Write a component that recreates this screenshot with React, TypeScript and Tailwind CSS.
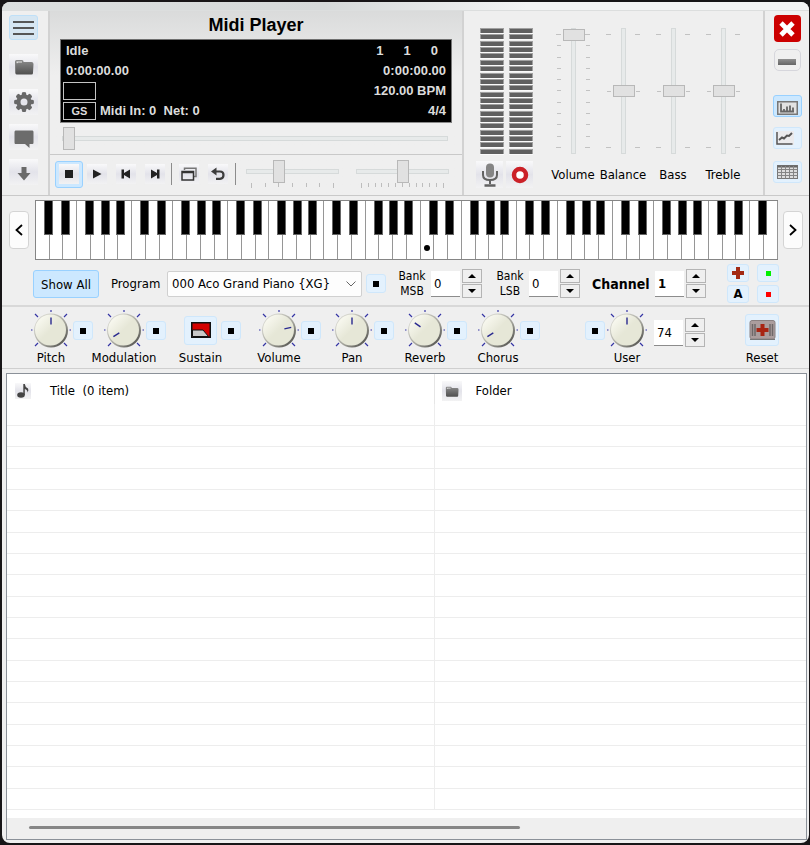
import type { ReactNode } from "react";

const LABEL = "text-[13px] leading-4 whitespace-nowrap";
const SOFT = "flex items-center justify-center bg-linear-to-b from-[#f9f9fa] via-[#e3e3ea] to-[#f2f2f3]";
const BLUE = "flex items-center justify-center rounded-[3px] border border-[#cfe7fb] bg-[#e3f1fd]";
const BLUE_ON = "flex items-center justify-center rounded-[3px] border border-[#99d1ff] bg-[#cce8ff]";

function IconButton({ label, className, children }: { label: string; className: string; children: ReactNode }) {
  return (
    <button type="button" aria-label={label} className={`shrink-0 ${className}`}>
      {children}
    </button>
  );
}

function FolderIcon({ className }: { className: string }) {
  return (
    <svg viewBox="0 0 20 16" className={className}>
      <defs>
        <linearGradient id="folder" x1="0" y1="0" x2="0" y2="1">
          <stop offset="0" stopColor="#8c8c8c" />
          <stop offset="1" stopColor="#505050" />
        </linearGradient>
      </defs>
      <path d="M1 2.5Q1 1 2.500 1H8Q9.500 1 9.500 2.500V3H17.500Q19.500 3 19.500 5L19 14Q19 15.500 17.500 15.500H3Q1.500 15.500 1.300 14Z" fill="url(#folder)" />
      <path d="M2.500 3.500V2.500H8V3.500H4L3 4.500Z" fill="#e8e8e8" />
    </svg>
  );
}

function GearIcon() {
  return (
    <svg viewBox="0 0 22 22" className="size-[22px]" fill="#686868">
      {[0, 45, 90, 135, 180, 225, 270, 315].map((a) => (
        <path key={a} d="M9 1.500Q11 .5 13 1.500L13.500 5H8.500Z" transform={`rotate(${a} 11 11)`} />
      ))}
      <circle cx="11" cy="11" r="5.500" fill="none" stroke="#686868" strokeWidth="4" />
    </svg>
  );
}

function SideBar() {
  return (
    <nav className="flex w-[46px] shrink-0 flex-col pt-1 pl-[7px]">
      <IconButton label="Menu" className="flex h-[25px] w-[29px] items-center justify-center rounded-[3px] border border-[#bfe0f8] bg-[#d6e6f2]">
        <svg viewBox="0 0 21 16" className="h-4 w-[21px]" stroke="#565656" strokeWidth="2.200">
          <path d="M0 2H21M0 8H21M0 14H21" />
        </svg>
      </IconButton>
      <IconButton label="Open folder" className={`${SOFT} mt-[14px] h-[26px] w-[29px]`}>
        <FolderIcon className="h-4 w-5" />
      </IconButton>
      <IconButton label="Settings" className={`${SOFT} mt-[9px] h-[26px] w-[29px]`}>
        <GearIcon />
      </IconButton>
      <IconButton label="Lyrics" className={`${SOFT} mt-[9px] h-[26px] w-[29px]`}>
        <svg viewBox="0 0 20 18" className="mt-1 h-[18px] w-5">
          <path d="M1.500 .5H18.500Q19.500 .5 19.500 2V12.500Q19.500 14 18.500 14H15.500L15.500 18L11 14H1.500Q.5 14 .5 12.500V2Q.5 .5 1.500 .5Z" fill="#6c6c6c" />
        </svg>
      </IconButton>
      <IconButton label="Expand" className={`${SOFT} mt-[9px] h-[26px] w-[29px]`}>
        <svg viewBox="0 0 14 14" className="mt-1 size-[14px]" fill="#6a6a6a">
          <path d="M4.500 0H9.500V6H13.500L7 13.500L.5 6H4.500Z" />
        </svg>
      </IconButton>
    </nav>
  );
}

function Display() {
  return (
    <div className="mx-[10px] border border-t-[#707070] border-r-[#777] border-b-[#8a8a8a] border-l-[#777] bg-black px-[5px] pt-px pb-px font-['Liberation_Sans',Arial,sans-serif] text-[13px] leading-5 font-bold text-[#dcdcdc]">
      <div className="flex justify-between">
        <span>Idle</span>
        <span className="flex gap-5 pr-2">
          <span>1</span>
          <span>1</span>
          <span>0</span>
        </span>
      </div>
      <div className="flex justify-between">
        <span>0:00:00.00</span>
        <span>0:00:00.00</span>
      </div>
      <div className="flex items-center justify-between">
        <span className="-ml-[3px] h-[18px] w-[33px] border border-[#c4c4c4]" />
        <span>120.00 BPM</span>
      </div>
      <div className="flex items-center justify-between">
        <span className="flex items-center gap-1 whitespace-pre">
          <span className="-ml-[3px] flex h-[18px] w-[33px] items-center justify-center border border-[#c4c4c4] text-[11px]">GS</span>
          Midi In: 0{"  "}Net: 0
        </span>
        <span>4/4</span>
      </div>
    </div>
  );
}

const H_RANGE =
  "block w-full appearance-none bg-transparent [&::-webkit-slider-runnable-track]:h-[5px] [&::-webkit-slider-runnable-track]:border [&::-webkit-slider-runnable-track]:border-[#d6dada] [&::-webkit-slider-runnable-track]:bg-[#e7eaea] [&::-webkit-slider-thumb]:-mt-[10px] [&::-webkit-slider-thumb]:h-[23px] [&::-webkit-slider-thumb]:w-3 [&::-webkit-slider-thumb]:appearance-none [&::-webkit-slider-thumb]:border [&::-webkit-slider-thumb]:border-[#b8b8b8] [&::-webkit-slider-thumb]:bg-[#e1e1e1]";

function SmallSlider({ label, value, ticks }: { label: string; value: number; ticks: number }) {
  return (
    <div className="min-w-0 flex-1">
      <input type="range" aria-label={label} min={0} max={12} defaultValue={value} className={`h-[23px] ${H_RANGE}`} />
      <div className="flex h-[5px] justify-between px-[5px]">
        {Array.from({ length: ticks }, (_, i) => (
          <span key={i} className={`w-px bg-[#bdbdbd] ${i === 0 || i === ticks - 1 ? "h-[5px]" : "h-1"}`} />
        ))}
      </div>
    </div>
  );
}

function Transport() {
  const pad = `${SOFT} size-5`;
  return (
    <div className="flex items-center border-t border-[#c9c9c9] pt-[5px] pb-[7px] pl-[5px]">
      <IconButton label="Stop" className={`${BLUE_ON} h-[27px] w-7`}>
        <span className={`${SOFT} size-5`}>
          <span className="size-2 bg-[#202020]" />
        </span>
      </IconButton>
      <div className="ml-1 flex gap-[9px]">
        <IconButton label="Play" className={pad}>
          <svg viewBox="0 0 10 10" className="size-[10px]" fill="#222"><path d="M1 .5L9.500 5L1 9.500Z" /></svg>
        </IconButton>
        <IconButton label="Previous" className={pad}>
          <svg viewBox="0 0 10 10" className="size-[10px]" fill="#222"><path d="M.5 .5H3V4L9 .5V9.500L3 6V9.500H.5Z" /></svg>
        </IconButton>
        <IconButton label="Next" className={pad}>
          <svg viewBox="0 0 10 10" className="size-[10px]" fill="#222"><path d="M9.500 .5H7V4L1 .5V9.500L7 6V9.500H9.500Z" /></svg>
        </IconButton>
      </div>
      <span className="ml-[6px] h-[22px] w-px bg-[#8c8c8c]" />
      <div className="ml-[7px] flex gap-[9px]">
        <IconButton label="Playlist window" className={pad}>
          <svg viewBox="0 0 16 14" className="h-[14px] w-4" fill="none" stroke="#333" strokeWidth="1.500">
            <path d="M3.500 3V1.200H15V9.500H13" stroke="#777" />
            <rect x="1" y="4.500" width="11.500" height="8.500" />
            <path d="M1 5.500H12.500" />
          </svg>
        </IconButton>
        <IconButton label="Repeat" className={pad}>
          <svg viewBox="0 0 14 14" className="size-[14px]">
            <path d="M3.500 4.500H9Q12.500 4.500 12.500 8T9 11.800H5" fill="none" stroke="#3c3c3c" strokeWidth="2.200" />
            <path d="M0 4.500L5.500 .5V8.500Z" fill="#3c3c3c" />
          </svg>
        </IconButton>
      </div>
      <span className="ml-[7px] h-[22px] w-px bg-[#8c8c8c]" />
      <div className="mr-[13px] ml-[10px] flex min-w-0 flex-1 gap-[17px]">
        <SmallSlider label="Tempo" value={4} ticks={7} />
        <SmallSlider label="Transpose" value={6} ticks={13} />
      </div>
    </div>
  );
}

function Player() {
  return (
    <section className="flex min-w-0 flex-1 flex-col border-l-2 border-[#d2d2d2] bg-linear-to-b from-[#dadbdb] via-[#efefef] via-35% to-[#efefef]">
      <h1 className="py-0.5 text-center font-['Liberation_Sans',Arial,sans-serif] text-lg leading-6 font-bold">Midi Player</h1>
      <Display />
      <div className="pt-1 pr-[14px] pb-1 pl-3">
        <input type="range" aria-label="Position" min={0} max={100} defaultValue={0} className={`h-[23px] ${H_RANGE}`} />
      </div>
      <Transport />
    </section>
  );
}

function Meter() {
  return (
    <div className="flex h-[126px] w-6 flex-col justify-between">
      {Array.from({ length: 20 }, (_, i) => (
        <span key={i} className="h-[5px] border-x border-t border-[#a0a0a0] bg-[#606060] shadow-[0_1px_0_#fafafa]" />
      ))}
    </div>
  );
}

function TickColumn({ full }: { full: boolean }) {
  return (
    <div className="flex h-[114px] flex-col items-center justify-between">
      {Array.from({ length: full ? 11 : 3 }, (_, i) => (
        <span key={i} className={`h-px bg-[#c2c2c2] ${i === 0 || i === (full ? 10 : 2) ? "w-[5px]" : "w-1"}`} />
      ))}
    </div>
  );
}

const V_RANGE =
  "h-[126px] w-[22px] [writing-mode:vertical-lr] [direction:rtl] appearance-none bg-transparent [&::-webkit-slider-runnable-track]:w-[5px] [&::-webkit-slider-runnable-track]:border [&::-webkit-slider-runnable-track]:border-[#d6dada] [&::-webkit-slider-runnable-track]:bg-[#e7eaea] [&::-webkit-slider-thumb]:-ml-[9px] [&::-webkit-slider-thumb]:h-3 [&::-webkit-slider-thumb]:w-[22px] [&::-webkit-slider-thumb]:appearance-none [&::-webkit-slider-thumb]:border [&::-webkit-slider-thumb]:border-[#b8b8b8] [&::-webkit-slider-thumb]:bg-[#e1e1e1]";

function Fader({ id, label, value, full = false }: { id: string; label: string; value: number; full?: boolean }) {
  return (
    <div className="flex w-[50px] flex-col items-center">
      <div className="flex items-center gap-px">
        <TickColumn full={full} />
        <input id={id} type="range" min={0} max={100} defaultValue={value} className={V_RANGE} />
        <TickColumn full={full} />
      </div>
      <label htmlFor={id} className={`mt-[13px] ${LABEL}`}>{label}</label>
    </div>
  );
}

function Mixer() {
  return (
    <section className="flex w-[301px] shrink-0 border-l-2 border-[#d2d2d2] pt-[17px] pl-[12px]">
      <div>
        <div className="flex gap-[5px] pl-1">
          <Meter />
          <Meter />
        </div>
        <div className="mt-[7px] flex gap-[3px]">
          <IconButton label="Microphone" className={`${SOFT} size-[27px]`}>
            <svg viewBox="0 0 18 24" className="h-6 w-[18px]" fill="none" stroke="#626262" strokeWidth="2">
              <rect x="5" y=".5" width="8" height="14" rx="4" fill="#858585" stroke="none" />
              <path d="M2 8V12Q2 17 9 17T16 12V8M9 17V21" />
              <path d="M3.500 22.500H14.500" strokeWidth="2.500" />
            </svg>
          </IconButton>
          <IconButton label="Record" className={`${SOFT} size-[27px]`}>
            <svg viewBox="0 0 18 18" className="size-[18px]">
              <circle cx="9" cy="9" r="6" fill="#fff" stroke="#cb2128" strokeWidth="4.500" />
            </svg>
          </IconButton>
        </div>
      </div>
      <div className="ml-[15px] flex">
        <Fader id="main-volume" label="Volume" value={100} full />
        <Fader id="balance" label="Balance" value={50} />
        <Fader id="bass" label="Bass" value={50} />
        <Fader id="treble" label="Treble" value={50} />
      </div>
    </section>
  );
}

function WindowTools() {
  return (
    <section className="flex w-[46px] shrink-0 flex-col items-center border-l-2 border-[#d2d2d2] pt-1">
      <IconButton label="Close" className="flex size-[27px] items-center justify-center rounded-[4px] bg-[#cc0000]">
        <svg viewBox="0 0 16 16" className="size-4" stroke="#fff" strokeWidth="4.800">
          <path d="M2 2L14 14M14 2L2 14" />
        </svg>
      </IconButton>
      <IconButton label="Minimize" className="mt-[7px] flex h-[22px] w-[27px] items-center justify-center rounded-[5px] border border-[#d6d6dc] bg-[#efefef]">
        <span className="mt-1 h-[6px] w-[18px] bg-linear-to-b from-[#909090] to-[#666]" />
      </IconButton>
      <IconButton label="Spectrum" className={`${BLUE_ON} mt-6 h-[22px] w-[29px]`}>
        <svg viewBox="0 0 21 14" className="mt-1 h-[14px] w-[21px]">
          <rect x=".75" y=".75" width="19.500" height="12.500" fill="#e2e2e2" stroke="#777" strokeWidth="1.500" />
          <path d="M4 2.500V10.500H17M7 10V8M10 10V5.500M13 10V4.500M16 10V6.500" fill="none" stroke="#666" strokeWidth="1.800" />
        </svg>
      </IconButton>
      <IconButton label="Graph" className={`${BLUE} mt-[10px] h-[22px] w-[29px]`}>
        <svg viewBox="0 0 18 14" className="mr-1 h-[14px] w-[18px]" fill="none" stroke="#555">
          <rect width="18" height="14" fill="#ebebed" stroke="none" />
          <path d="M1 1V13H16.500" strokeWidth="1.500" />
          <path d="M3 9L6 6.500L8 7.500L11 4.500L13 5L16 2" strokeWidth="2" />
        </svg>
      </IconButton>
      <IconButton label="Grid" className={`${BLUE} mt-[12px] h-[22px] w-[29px]`}>
        <svg viewBox="0 0 21 14" className="h-[14px] w-[21px]">
          <rect x=".5" y=".5" width="20" height="13" fill="#ddd" stroke="#777" />
          <path d="M.5 1.500H20.500" stroke="#666" strokeWidth="2" />
          <path d="M.5 4.500H20.500M.5 7.500H20.500M.5 10.500H20.500M4.500 1V13.500M8.500 1V13.500M12.500 1V13.500M16.500 1V13.500" stroke="#858585" />
        </svg>
      </IconButton>
    </section>
  );
}

const SHARPS: Record<number, string> = { 0: "left-[8px]", 1: "left-[11px]", 3: "left-[8px]", 4: "left-[10px]", 5: "left-[11px]" };

function Keyboard() {
  return (
    <div className="flex h-[60px] min-w-0 flex-1 border-t border-b border-l border-[#858585] bg-white">
      {Array.from({ length: 54 }, (_, i) => {
        const sharp = i < 53 ? SHARPS[i % 7] : undefined;
        return (
          <div key={i} className="relative flex-1">
            <button type="button" aria-label={`White key ${i + 1}`} className="flex h-full w-full items-end justify-center border-r border-[#969696] pb-[8px]">
              {i === 28 && <span className="size-[6px] rounded-full bg-black" />}
            </button>
            {sharp && (
              <button type="button" aria-label={`Black key ${i + 1}`} className={`absolute top-0 z-10 h-[34px] w-[9px] border border-t-0 border-[#666] bg-black ${sharp}`} />
            )}
          </div>
        );
      })}
    </div>
  );
}

function PageButton({ label, path }: { label: string; path: string }) {
  return (
    <IconButton label={label} className="flex h-[38px] w-5 items-center justify-center rounded-[4px] border border-[#d4d4d4] bg-[#fcfcfc]">
      <svg viewBox="0 0 8 12" className="h-3 w-2" fill="none" stroke="#000" strokeWidth="1.800">
        <path d={path} />
      </svg>
    </IconButton>
  );
}

function DotButton({ label }: { label: string }) {
  return (
    <IconButton label={label} className={`${BLUE} h-[19px] w-5`}>
      <span className="size-[6px] bg-black" />
    </IconButton>
  );
}

function Spinner({ id, value, bold = false }: { id: string; value: string; bold?: boolean }) {
  const step = "flex h-[14px] w-5 items-center justify-center border border-[#b4b4b4] bg-[#efefef]";
  return (
    <div className="flex items-center gap-[2px]">
      <input id={id} type="text" aria-label={id} defaultValue={value} className={`h-[26px] w-[29px] border-b border-[#8c8c8c] bg-white px-[3px] text-[13px] ${bold ? "font-bold" : ""}`} />
      <div className="flex flex-col gap-px">
        <IconButton label="Increase" className={step}>
          <svg viewBox="0 0 8 4" className="h-1 w-2"><path d="M4 0L8 4H0Z" /></svg>
        </IconButton>
        <IconButton label="Decrease" className={step}>
          <svg viewBox="0 0 8 4" className="h-1 w-2"><path d="M4 4L8 0H0Z" /></svg>
        </IconButton>
      </div>
    </div>
  );
}

function ProgramRow() {
  const mini = `${BLUE} h-[18px] w-[22px]`;
  return (
    <section className="flex h-[43px] items-center border-b-2 border-[#d8d8d8] pb-0.5 pl-[31px]">
      <button type="button" className={`${BLUE_ON} h-7 w-[66px] shrink-0 pt-0.5 ${LABEL}`}>Show All</button>
      <label htmlFor="program" className={`ml-3 w-[51px] ${LABEL}`}>Program</label>
      <div className="relative ml-[5px] w-[195px]">
        <select id="program" className="block h-[26px] w-full appearance-none rounded-[2px] border border-[#d0d0d0] bg-[#fdfdfd] pl-1 text-[13px]">
          <option>{"000 Aco Grand Piano {XG}"}</option>
        </select>
        <svg viewBox="0 0 10 6" className="pointer-events-none absolute top-[10px] right-[6px] h-[6px] w-[10px]" fill="none" stroke="#666">
          <path d="M.5 .5L5 5L9.500 .5" />
        </svg>
      </div>
      <div className="mr-[10px] ml-1 flex">
        <DotButton label="Lock program" />
      </div>
      <div className="flex items-center">
        <label htmlFor="msb" className="w-8 text-center text-[12px] leading-[15px]">Bank MSB</label>
        <div className="ml-[3px]"><Spinner id="msb" value="0" /></div>
      </div>
      <div className="ml-3 flex items-center">
        <label htmlFor="lsb" className="w-8 text-center text-[12px] leading-[15px]">Bank LSB</label>
        <div className="ml-[3px]"><Spinner id="lsb" value="0" /></div>
      </div>
      <div className="ml-3 flex items-center">
        <label htmlFor="channel" className="w-[63px] text-sm font-bold">Channel</label>
        <Spinner id="channel" value="1" bold />
      </div>
      <div className="ml-[21px] grid grid-cols-2 gap-x-2 gap-y-[3px]">
        <IconButton label="Add channel" className={mini}>
          <svg viewBox="0 0 12 12" className="size-3" fill="#a32a14"><path d="M4 0H8V4H12V8H8V12H4V8H0V4H4Z" /></svg>
        </IconButton>
        <IconButton label="Enable" className={mini}><span className="size-[5px] bg-[#00f000]" /></IconButton>
        <button type="button" className={`${mini} text-[13px] font-bold`}>A</button>
        <IconButton label="Disable" className={mini}><span className="size-[5px] bg-[#f00]" /></IconButton>
      </div>
    </section>
  );
}

function Knob({ id, label, angle }: { id: string; label: string; angle: number }) {
  return (
    <div className="flex w-10 flex-col items-center">
      <div className="relative size-10">
        <svg viewBox="0 0 40 40" className="size-10">
          <defs>
            <linearGradient id="knob-rim" x1="0" y1="0" x2="1" y2="1">
              <stop offset=".2" stopColor="#d2d2ca" />
              <stop offset=".6" stopColor="#a0a098" />
              <stop offset=".9" stopColor="#50504c" />
            </linearGradient>
            <linearGradient id="knob-face" x1="0" y1="0" x2="1" y2="1">
              <stop offset=".1" stopColor="#fafaf2" />
              <stop offset=".5" stopColor="#e6e7d7" />
            </linearGradient>
          </defs>
          <path d="M20 0V2M0 20H1.500M38.500 20H40M4 4L7 7M36 4L33 7M4 36L7 33M36 36L33 33" stroke="#3434a4" strokeWidth="1.200" />
          <circle cx="20" cy="20.500" r="17" fill="url(#knob-rim)" />
          <circle cx="19.500" cy="20" r="15.500" fill="url(#knob-face)" />
          <path d="M20 7.500V14.500" stroke="#29298f" strokeWidth="1.400" transform={`rotate(${angle} 20 20)`} />
        </svg>
        <input id={id} type="range" min={-135} max={135} defaultValue={angle} className="absolute inset-0 size-10 opacity-0" />
      </div>
      <label htmlFor={id} className={LABEL}>{label}</label>
    </div>
  );
}

function KnobUnit({ id, label, angle }: { id: string; label: string; angle: number }) {
  return (
    <div className="flex gap-[2px]">
      <Knob id={id} label={label} angle={angle} />
      <div className="pt-[11px]"><DotButton label={`Lock ${label}`} /></div>
    </div>
  );
}

function KnobRow() {
  return (
    <section className="flex h-[62px] items-start border-b border-[#cfcfcf] pt-[3px] pl-[29px]">
      <div className="flex gap-[11px]">
        <KnobUnit id="pitch" label="Pitch" angle={0} />
        <KnobUnit id="modulation" label="Modulation" angle={-122} />
      </div>
      <div className="mx-[18px] flex gap-[4px]">
        <div className="flex w-[33px] flex-col items-center">
          <div className="flex h-10 items-center">
            <IconButton label="Sustain pedal" className={`${BLUE} h-[29px] w-[33px]`}>
              <svg viewBox="0 0 20 16" className="h-4 w-5">
                <rect x=".75" y=".75" width="18.500" height="14.500" fill="#d40000" stroke="#111" strokeWidth="1.500" />
                <path d="M1.500 8H12L17.500 14.500H1.500Z" fill="#c8c8c8" stroke="#111" />
              </svg>
            </IconButton>
          </div>
          <span className={LABEL}>Sustain</span>
        </div>
        <div className="pt-[11px]"><DotButton label="Lock Sustain" /></div>
      </div>
      <div className="flex gap-[11px]">
        <KnobUnit id="volume" label="Volume" angle={78} />
        <KnobUnit id="pan" label="Pan" angle={0} />
        <KnobUnit id="reverb" label="Reverb" angle={-55} />
        <KnobUnit id="chorus" label="Chorus" angle={-122} />
      </div>
      <div className="ml-[45px] flex gap-[2px]">
        <div className="pt-[11px]"><DotButton label="Lock User" /></div>
        <Knob id="user" label="User" angle={0} />
      </div>
      <div className="ml-[7px] pt-[8px]"><Spinner id="user-value" value="74" /></div>
      <div className="ml-[40px] flex w-[34px] flex-col items-center">
        <div className="flex h-10 items-center">
          <IconButton label="Reset controllers" className={`${BLUE} h-8 w-[34px]`}>
            <svg viewBox="0 0 27 22" className="h-[22px] w-[27px]">
              <rect x="1" y="1.500" width="25" height="18.500" rx="2" fill="#ab9d9d" stroke="#8a8080" />
              <path d="M3.500 5V17M6 5V17M21 5V17M23.500 5V17" stroke="#6e6868" strokeWidth="1.500" />
              <path d="M1 20.500H26" stroke="#777" />
              <path d="M11.500 5H15.500V9H19.500V13H15.500V17H11.500V13H7.500V9H11.500Z" fill="#a82412" />
            </svg>
          </IconButton>
        </div>
        <span className={LABEL}>Reset</span>
      </div>
    </section>
  );
}

function FileList() {
  return (
    <section className="mt-1 mr-0.5 mb-[3px] ml-1 flex flex-1 flex-col border border-[#8b9199] bg-white">
      <table className="w-full table-fixed border-collapse text-[13px]">
        <thead>
          <tr className="h-[30px] text-left">
            <th className="w-[427px] border-r border-[#e6e6e6] p-0 font-normal">
              <span className="flex items-center gap-[19px] pt-1 pl-2 whitespace-pre">
                <span className={`${SOFT} size-4`}>
                  <svg viewBox="0 0 12 14" className="h-[14px] w-3" fill="#444">
                    <ellipse cx="4" cy="11" rx="3.800" ry="2.700" />
                    <path d="M6.300 11V0H7.800Q8 3 11 4.500Q12 6 10.500 8.500Q10.500 5.500 7.800 5V11Z" />
                  </svg>
                </span>
                Title{"  "}(0 item)
              </span>
            </th>
            <th className="p-0 font-normal">
              <span className="flex items-center gap-[14px] pt-1 pl-[7px]">
                <span className={`${SOFT} size-5`}><FolderIcon className="h-[11px] w-[14px]" /></span>
                Folder
              </span>
            </th>
          </tr>
        </thead>
        <tbody>
          {Array.from({ length: 19 }, (_, i) => (
            <tr key={i} className="h-[21px] border-b border-[#ededed] nth-[3n]:h-[22px]">
              <td className="border-r border-[#ededed] p-0" />
              <td className="p-0" />
            </tr>
          ))}
        </tbody>
      </table>
      <div className="mt-auto h-[21px] bg-[#efefef] px-[22px] pt-[8px]">
        <div className="h-[3px] w-[65%] rounded-full bg-[#868686]" />
      </div>
    </section>
  );
}

export default function App() {
  return (
    <div className="min-h-screen bg-[#171517] p-0.5 pr-px font-['DejaVu_Sans_Condensed','DejaVu_Sans',sans-serif] text-black">
      <main className="flex min-h-[841px] flex-col overflow-hidden rounded-lg bg-[#efefef]">
        <div className="h-[9px] border-b border-[#dcdede] bg-linear-to-r from-[#dcdfdf] via-[#d5d9d9] via-40% to-[#f3f3f4] to-65%" />
        <div className="flex border-b border-[#c9c9c9]">
          <SideBar />
          <Player />
          <Mixer />
          <WindowTools />
        </div>
        <section className="flex items-center pt-1 pr-[6px] pb-1 pl-[7px]">
          <PageButton label="Lower octave" path="M7 1L1.500 6L7 11" />
          <div className="mr-[5px] ml-[6px] flex min-w-0 flex-1"><Keyboard /></div>
          <PageButton label="Higher octave" path="M1 1L6.500 6L1 11" />
        </section>
        <ProgramRow />
        <KnobRow />
        <FileList />
      </main>
    </div>
  );
}
